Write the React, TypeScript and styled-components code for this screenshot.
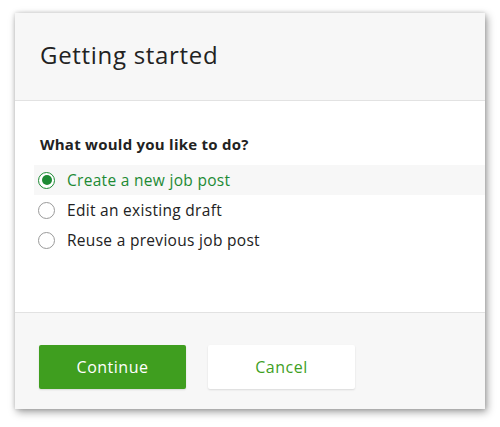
import React, { useState } from "react";
import styled, { createGlobalStyle } from "styled-components";

const GlobalStyle = createGlobalStyle`
  html, body {
    margin: 0;
    padding: 0;
    background: #ffffff;
    font-family: "Open Sans", "Lato", sans-serif;
  }
`;

const Page = styled.div`
  padding: 13px 15px 18px 15px;
`;

const Dialog = styled.div`
  width: 470px;
  background: #ffffff;
  box-shadow: 2px 3px 8px rgba(0, 0, 0, 0.38), 0 0 4px rgba(0, 0, 0, 0.15);
`;

const Header = styled.div`
  height: 88px;
  box-sizing: border-box;
  background: #f7f7f7;
  border-bottom: 1px solid #e2e2e2;
  display: flex;
  align-items: center;
  padding: 0 25px 4px 25px;
`;

const Title = styled.h2`
  margin: 0;
  font-size: 24px;
  font-weight: 400;
  color: #222222;
  letter-spacing: 0.7px;
`;

const Body = styled.div`
  padding: 33px 0 57px 19px;
`;

const Question = styled.div`
  font-size: 15px;
  line-height: 20px;
  font-weight: 700;
  color: #222222;
  letter-spacing: 0.25px;
  padding-left: 6px;
  margin-bottom: 11px;
`;

const Option = styled.label<{ $active: boolean }>`
  display: flex;
  align-items: center;
  gap: 12px;
  height: 30px;
  padding-left: 4px;
  cursor: pointer;
  font-size: 15.5px;
  letter-spacing: 0.3px;
  color: ${(p) => (p.$active ? "#1d8a34" : "#222222")};
  background: ${(p) => (p.$active ? "#f7f7f7" : "transparent")};
`;

const Radio = styled.span<{ $active: boolean }>`
  width: 17px;
  height: 17px;
  box-sizing: border-box;
  border-radius: 50%;
  border: ${(p) => (p.$active ? "1.5px solid #1d8a34" : "1px solid #9a9a9a")};
  background: #ffffff;
  display: flex;
  align-items: center;
  justify-content: center;
  flex-shrink: 0;
  &::after {
    content: "";
    width: 10px;
    height: 10px;
    border-radius: 50%;
    background: ${(p) => (p.$active ? "#1d8a34" : "transparent")};
  }
`;

const Footer = styled.div`
  background: #f7f7f7;
  border-top: 1px solid #e2e2e2;
  display: flex;
  gap: 22px;
  padding: 32px 24px 20px 24px;
`;

const Button = styled.button<{ $primary?: boolean }>`
  width: 147px;
  height: 44px;
  border: none;
  border-radius: 2px;
  font-family: inherit;
  font-size: 16px;
  cursor: pointer;
  letter-spacing: 0.5px;
  color: ${(p) => (p.$primary ? "#ffffff" : "#3fa01f")};
  background: ${(p) => (p.$primary ? "#3f9e1f" : "#ffffff")};
  box-shadow: 0 1px 2px rgba(0, 0, 0, 0.12);
`;

const options = [
  "Create a new job post",
  "Edit an existing draft",
  "Reuse a previous job post",
];

export default function App() {
  const [selected, setSelected] = useState(0);
  return (
    <>
      <GlobalStyle />
      <Page>
        <Dialog>
          <Header>
            <Title>Getting started</Title>
          </Header>
          <Body>
            <Question>What would you like to do?</Question>
            {options.map((o, i) => (
              <Option key={o} $active={selected === i} onClick={() => setSelected(i)}>
                <Radio $active={selected === i} />
                {o}
              </Option>
            ))}
          </Body>
          <Footer>
            <Button $primary>Continue</Button>
            <Button>Cancel</Button>
          </Footer>
        </Dialog>
      </Page>
    </>
  );
}
